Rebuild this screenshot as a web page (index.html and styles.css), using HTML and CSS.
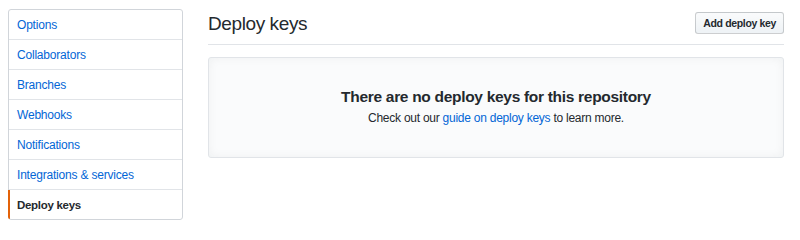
FILE: index.html
```html
<!DOCTYPE html>
<html lang="en">
<head>
<meta charset="utf-8">
<title>Deploy keys</title>
<link rel="stylesheet" href="styles.css">
</head>
<body>
<div class="page">
  <nav class="menu">
    <a class="menu-item" href="#">Options</a>
    <a class="menu-item" href="#">Collaborators</a>
    <a class="menu-item" href="#">Branches</a>
    <a class="menu-item" href="#">Webhooks</a>
    <a class="menu-item" href="#">Notifications</a>
    <a class="menu-item" href="#">Integrations &amp; services</a>
    <a class="menu-item selected" href="#">Deploy keys</a>
  </nav>
  <main class="content">
    <div class="subhead">
      <h2 class="subhead-title">Deploy keys</h2>
      <button class="btn" type="button">Add deploy key</button>
    </div>
    <div class="blankslate">
      <h3 class="blank-title">There are no deploy keys for this repository</h3>
      <p class="blank-text">Check out our <a href="#">guide on deploy keys</a> to learn more.</p>
    </div>
  </main>
</div>
</body>
</html>
```

FILE: styles.css
```css
* { box-sizing: border-box; }
html, body {
  margin: 0;
  padding: 0;
  background: #ffffff;
  font-family: "Liberation Sans", Arial, sans-serif;
  color: #24292e;
}
.page {
  display: flex;
  align-items: flex-start;
  gap: 25px;
  padding: 9px 16px 0 8px;
}
.menu {
  width: 175px;
  flex: none;
  display: flex;
  flex-direction: column;
  border: 1px solid #d1d5da;
  border-radius: 3px;
  background: #fff;
}
.menu-item {
  position: relative;
  display: block;
  height: 30px;
  line-height: 29px;
  padding: 1px 8px 0;
  font-size: 12px;
  letter-spacing: -0.2px;
  color: #0366d6;
  text-decoration: none;
  border-bottom: 1px solid #e1e4e8;
}
.menu-item:last-child {
  border-bottom: 0;
  height: 29px;
  line-height: 28px;
}
.menu-item.selected {
  color: #24292e;
  font-weight: bold;
  font-size: 11.5px;
  letter-spacing: -0.3px;
}
.menu-item.selected::before {
  content: "";
  position: absolute;
  left: -1px;
  top: 0;
  bottom: 0;
  width: 2px;
  background: #e36209;
  border-bottom-left-radius: 3px;
}
.content {
  flex: 1;
  min-width: 0;
}
.subhead {
  display: flex;
  align-items: center;
  justify-content: space-between;
  margin-top: 3px;
  padding-bottom: 10px;
  border-bottom: 1px solid #e1e4e8;
}
.subhead-title {
  margin: 0;
  padding-top: 1px;
  font-size: 19px;
  font-weight: normal;
  letter-spacing: -0.4px;
  line-height: 21px;
  color: #24292e;
}
.btn {
  height: 22px;
  padding: 0 7px;
  font-family: "Liberation Sans", Arial, sans-serif;
  font-size: 10.5px;
  font-weight: bold;
  letter-spacing: -0.35px;
  color: #24292e;
  background: linear-gradient(#fafbfc, #eff3f6 90%);
  border: 1px solid rgba(27, 31, 35, 0.2);
  border-radius: 3px;
  cursor: pointer;
}
.blankslate {
  margin-top: 12px;
  padding: 29px 16px 30px;
  text-align: center;
  background: #fafbfc;
  border: 1px solid #e1e4e8;
  border-radius: 3px;
  box-shadow: inset 0 0 10px rgba(27, 31, 35, 0.05);
}
.blank-title {
  margin: 0 0 2px;
  font-size: 15.5px;
  line-height: 20px;
  font-weight: bold;
  letter-spacing: -0.3px;
  color: #24292e;
}
.blank-text {
  margin: 0;
  font-size: 12px;
  line-height: 18px;
  letter-spacing: -0.25px;
  color: #24292e;
}
.blank-text a {
  color: #0366d6;
  text-decoration: none;
}
```
